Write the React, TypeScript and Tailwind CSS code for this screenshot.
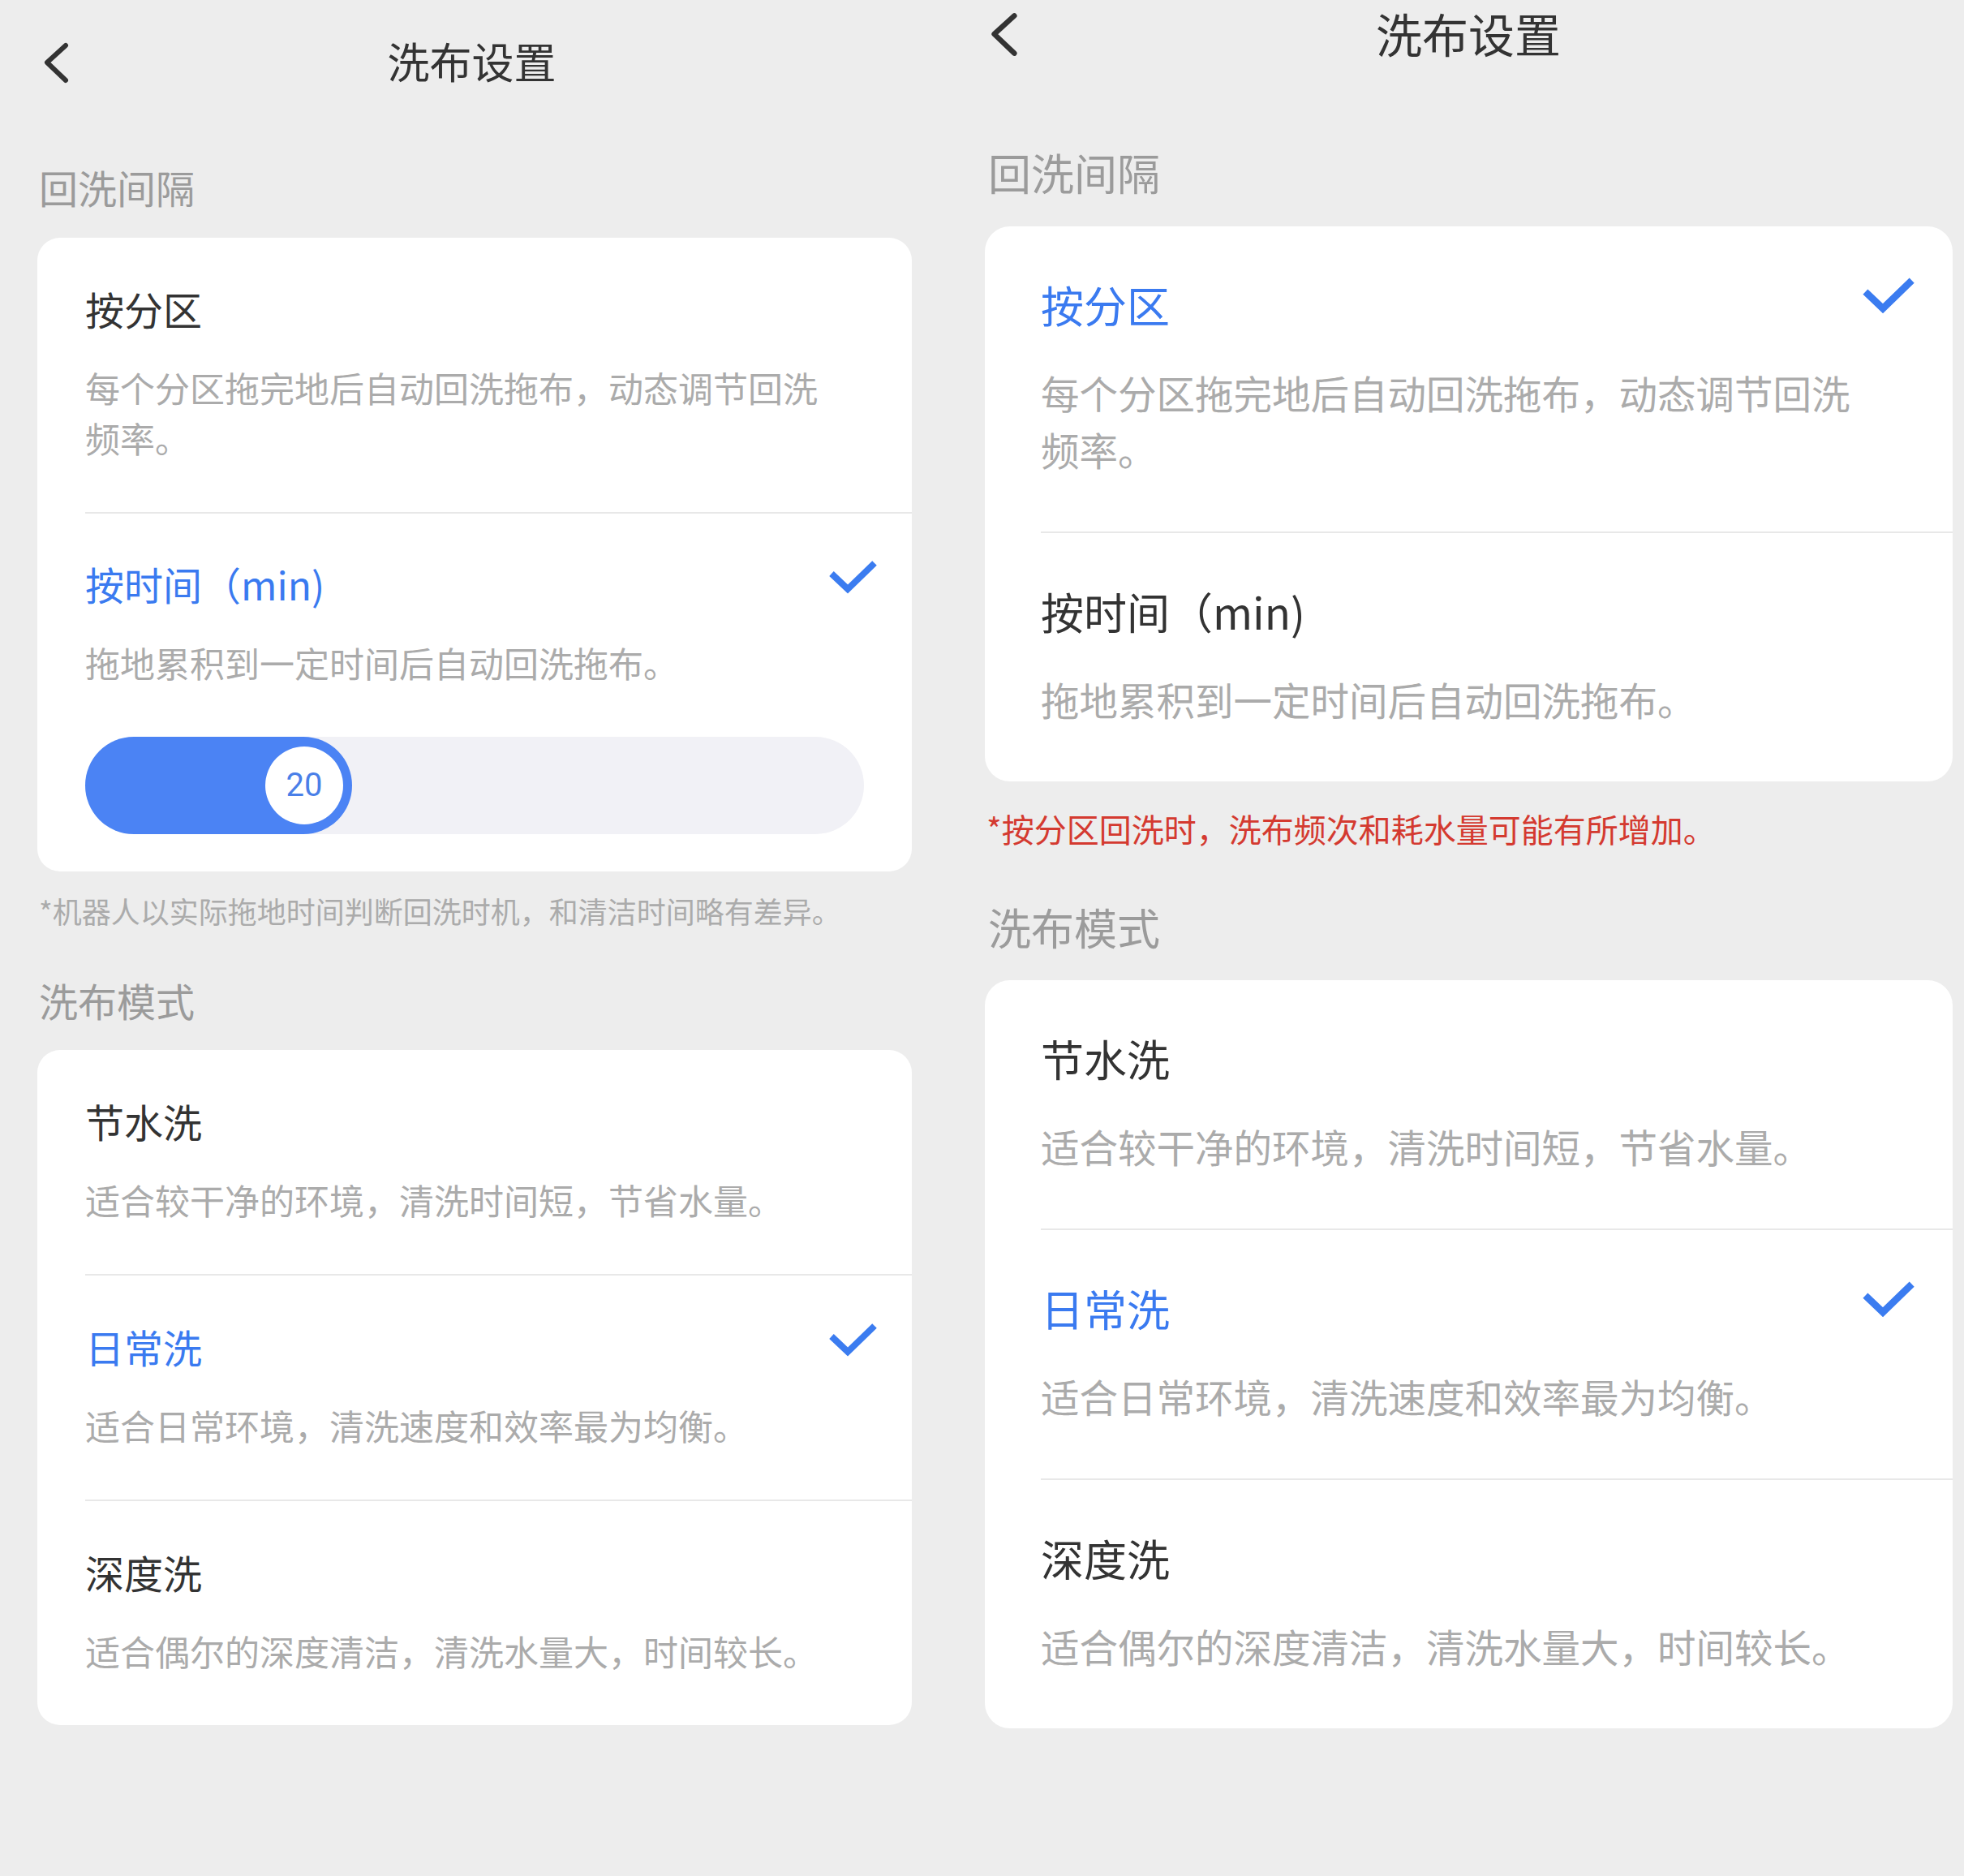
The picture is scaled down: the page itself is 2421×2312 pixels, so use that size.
import React from "react";

type V = "L" | "R";

const S = {
  L: {
    row: "pt-[57px] pb-[61px] pl-[59px]",
    title: "text-[48px] leading-[60px]",
    gap: "mt-[36px]",
    desc: "text-[43px] leading-[62px]",
    divider: "ml-[59px] h-[2px] bg-[#e8e8e8]",
  },
  R: {
    row: "pt-[63px] pb-[66px] pl-[69px]",
    title: "text-[53px] leading-[66px]",
    gap: "mt-[41px]",
    desc: "text-[47.5px] leading-[70px]",
    divider: "ml-[69px] h-[2px] bg-[#e8e8e8]",
  },
};

function Check({ v }: { v: V }) {
  return (
    <svg
      viewBox="0 0 62 46"
      fill="none"
      className={
        v === "L"
          ? "w-[62px] h-[46px] mr-[42px] -translate-y-[8px] shrink-0"
          : "w-[67px] h-[50px] mr-[46px] -translate-y-[11px] shrink-0"
      }
    >
      <path d="M5 19 L25 38 L58 6" stroke="#3b7cf0" strokeWidth="8" strokeLinejoin="miter" />
    </svg>
  );
}

function Chevron({ v }: { v: V }) {
  return (
    <svg
      viewBox="0 0 34 52"
      fill="none"
      className={v === "L" ? "w-[34px] h-[52px] ml-[53px]" : "w-[37px] h-[56px] ml-[57px]"}
    >
      <path d="M28 5 L5 26 L28 48" stroke="#333333" strokeWidth="6" strokeLinecap="round" strokeLinejoin="round" />
    </svg>
  );
}

function Item({
  v,
  title,
  desc,
  selected,
  rowCls,
  children,
}: {
  v: V;
  title: string;
  desc: string[];
  selected?: boolean;
  rowCls?: string;
  children?: React.ReactNode;
}) {
  const s = S[v];
  return (
    <div className={rowCls ?? s.row}>
      <div className="flex items-center justify-between">
        <div className={`${s.title} ${selected ? "text-[#3a7af0]" : "text-[#333333]"} whitespace-nowrap`}>{title}</div>
        {selected && <Check v={v} />}
      </div>
      <div className={`${s.gap} ${s.desc} text-[#ababab] whitespace-nowrap`}>
        {desc.map((d, i) => (
          <div key={i}>{d}</div>
        ))}
      </div>
      {children}
    </div>
  );
}

function Slider() {
  return (
    <div className="mt-[61px] mr-[59px] h-[120px] rounded-full bg-[#f1f1f6] flex">
      <div className="w-[329px] h-full rounded-full bg-[#4b83f4] flex items-center justify-end pr-[11px]">
        <div className="w-[96px] h-[96px] rounded-full bg-white flex items-center justify-center font-['Roboto',sans-serif] text-[40px] text-[#4a7fe8]">
          20
        </div>
      </div>
    </div>
  );
}

function LeftPanel() {
  const s = S.L;
  return (
    <div className="w-[1163px] shrink-0 flex flex-col">
      <div className="h-[154px] grid grid-cols-[1fr_auto_1fr] items-center">
        <div>
          <Chevron v="L" />
        </div>
        <div className="text-[52px] leading-[64px] text-[#333333] -translate-y-[2px]">洗布设置</div>
        <div />
      </div>
      <div className="mt-[46px] ml-[48px] text-[48px] leading-[60px] text-[#9b9b9b]">回洗间隔</div>
      <div className="mt-[33px] ml-[46px] w-[1078px] bg-white rounded-[28px] overflow-hidden">
        <Item v="L" title="按分区" desc={["每个分区拖完地后自动回洗拖布，动态调节回洗", "频率。"]} />
        <div className={s.divider} />
        <Item
          v="L"
          title="按时间（min)"
          desc={["拖地累积到一定时间后自动回洗拖布。"]}
          selected
          rowCls="pt-[56px] pb-[46px] pl-[59px]"
        >
          <Slider />
        </Item>
      </div>
      <div className="mt-[24px] ml-[48px] text-[36px] leading-[48px] text-[#ababab] whitespace-nowrap">
        *机器人以实际拖地时间判断回洗时机，和清洁时间略有差异。
      </div>
      <div className="mt-[56px] ml-[48px] text-[48px] leading-[60px] text-[#9b9b9b]">洗布模式</div>
      <div className="mt-[32px] ml-[46px] w-[1078px] bg-white rounded-[28px] overflow-hidden">
        <Item v="L" title="节水洗" desc={["适合较干净的环境，清洗时间短，节省水量。"]} />
        <div className={s.divider} />
        <Item v="L" title="日常洗" desc={["适合日常环境，清洗速度和效率最为均衡。"]} selected />
        <div className={s.divider} />
        <Item v="L" title="深度洗" desc={["适合偶尔的深度清洁，清洗水量大，时间较长。"]} />
      </div>
    </div>
  );
}

function RightPanel() {
  const s = S.R;
  return (
    <div className="w-[1258px] shrink-0 overflow-hidden">
      <div className="w-[1294px] flex flex-col">
        <div className="h-[84px] grid grid-cols-[1fr_auto_1fr] items-center">
          <div>
            <Chevron v="R" />
          </div>
          <div className="text-[57px] leading-[70px] text-[#333333] -translate-y-[2px]">洗布设置</div>
          <div />
        </div>
        <div className="mt-[95px] ml-[55px] text-[53px] leading-[66px] text-[#9b9b9b]">回洗间隔</div>
        <div className="mt-[34px] ml-[51px] w-[1193px] bg-white rounded-[31px] overflow-hidden">
          <Item v="R" title="按分区" desc={["每个分区拖完地后自动回洗拖布，动态调节回洗", "频率。"]} selected />
          <div className={s.divider} />
          <Item v="R" title="按时间（min)" desc={["拖地累积到一定时间后自动回洗拖布。"]} />
        </div>
        <div className="mt-[32px] ml-[53px] text-[40px] leading-[52px] text-[#d43a30] whitespace-nowrap">
          *按分区回洗时，洗布频次和耗水量可能有所增加。
        </div>
        <div className="mt-[62px] ml-[55px] text-[53px] leading-[66px] text-[#9b9b9b]">洗布模式</div>
        <div className="mt-[33px] ml-[51px] w-[1193px] bg-white rounded-[31px] overflow-hidden">
          <Item v="R" title="节水洗" desc={["适合较干净的环境，清洗时间短，节省水量。"]} />
          <div className={s.divider} />
          <Item v="R" title="日常洗" desc={["适合日常环境，清洗速度和效率最为均衡。"]} selected />
          <div className={s.divider} />
          <Item v="R" title="深度洗" desc={["适合偶尔的深度清洁，清洗水量大，时间较长。"]} />
        </div>
      </div>
    </div>
  );
}

export default function App() {
  return (
    <div className="w-[2421px] h-[2312px] bg-[#ededed] flex overflow-hidden font-['Noto_Sans_CJK_SC',sans-serif]">
      <LeftPanel />
      <RightPanel />
    </div>
  );
}
